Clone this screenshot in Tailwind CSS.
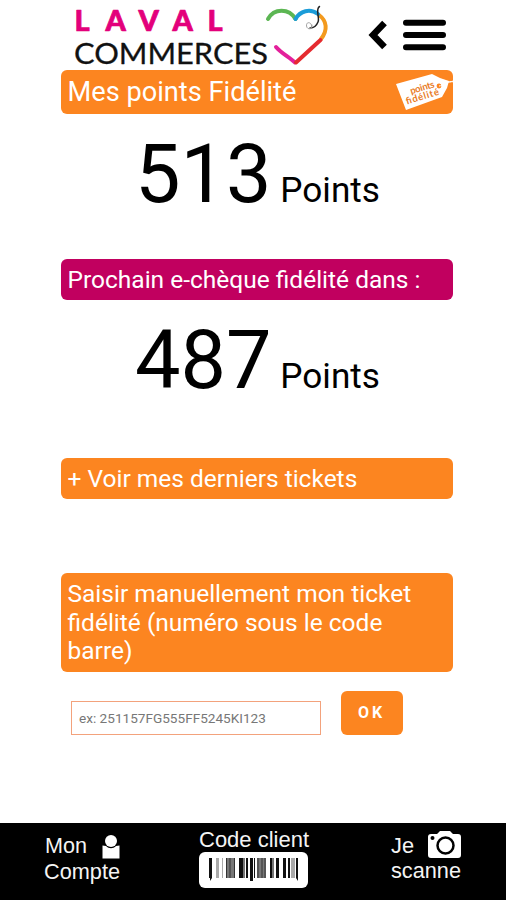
<!DOCTYPE html>
<html lang="fr">
<head>
<meta charset="utf-8">
<title>Laval Commerces</title>
<script src="https://cdn.jsdelivr.net/npm/@tailwindcss/browser@4"></script>
</head>
<body class="bg-white">
<div class="w-[506px] h-[900px] flex flex-col bg-white text-black font-[Roboto,sans-serif] overflow-hidden">
  <header class="h-[70px] shrink-0 flex">
    <svg class="ml-[61px] w-[280px] h-[70px]" viewBox="61 0 280 70" fill="none" stroke-linecap="round" stroke-linejoin="round">
      <text x="74.500 105.500 138.500 172.500 207.500" y="31" font-family="Lato, sans-serif" font-weight="900" font-size="29" fill="#e3007b" stroke="#e3007b" stroke-width=".7">LAVAL</text>
      <text x="74" y="63.5" font-family="Lato, sans-serif" font-weight="400" font-size="28.500" fill="#111" stroke="#111" stroke-width=".3" textLength="194" lengthAdjust="spacingAndGlyphs">COMMERCES</text>
      <g stroke-width="4">
        <path d="M268 19C274 8 289 8 295.500 19" stroke="#5cb653"/>
        <path d="M319 15C327 21 328 30 321 39" stroke="#f39a1e"/>
        <path d="M295.500 19C300 11 310 8 318 14" stroke="#1b9cd8"/>
        <path d="M295 62.500C289 57 281 53 276 47" stroke="#e3209b"/>
        <path d="M320.500 40L296 62.500" stroke="#e52b30"/>
      </g>
      <path d="M319.500 6.500C315 9 320 18 318 22C316 27 313 28 310 28" stroke="#222" stroke-width="1.500"/>
      <path d="M311 28C314 23 306 20 306.500 26C307 30 313 30 312 25" stroke="#999" stroke-width=".9"/>
    </svg>
    <svg class="ml-[23px] w-[90px] h-[70px]" viewBox="364 0 90 70" fill="none" stroke="#000" stroke-width="6">
      <path d="M384.500 23L373 35L384.500 47" stroke-width="6.500"/>
      <path d="M406 22.800H443M406 35H443M406 47.200H443" stroke-linecap="round"/>
    </svg>
  </header>
  <main class="ml-[61px] w-[392px] h-[753px] shrink-0 flex flex-col">
    <section class="h-[44px] shrink-0 rounded-[6px] bg-[#fc8520] text-white flex items-center justify-between pl-[6.5px]">
      <h1 class="text-[27.2px] leading-[43px] whitespace-nowrap">Mes points Fidélité</h1>
      <svg class="w-[60px] h-[44px] overflow-visible" viewBox="393 70 60 44">
        <path d="M396 84L432 74L440 78L449 81L447 88L442 97L406 110Z" fill="#fff"/>
        <circle cx="439" cy="86" r="2.400" fill="#fc8520"/>
        <path d="M439 86C443 86 447 80 454 82M440 84C445 79 448 84 453 81" fill="none" stroke="#fff" stroke-width="1"/>
        <g fill="#e87a25" font-family="Lato, sans-serif" font-weight="700" transform="rotate(-17 422 92)">
          <text x="411" y="91" font-size="9.500" textLength="25">points</text>
          <text x="404" y="99.500" font-size="9.500" textLength="34">fidélité</text>
        </g>
      </svg>
    </section>
    <div class="h-[145px] shrink-0 pl-[74px] pt-[13px] leading-[95px] whitespace-nowrap"><span class="text-[81px]">513</span><span class="text-[35.2px]"> Points</span></div>
    <section class="h-[41px] shrink-0 rounded-[6px] bg-[#c1005f] text-white pl-[6.5px]">
      <h2 class="text-[24.5px] leading-[41px] whitespace-nowrap">Prochain e-chèque fidélité dans :</h2>
    </section>
    <div class="h-[158px] shrink-0 pl-[74px] pt-[13px] leading-[95px] whitespace-nowrap"><span class="text-[81px]">487</span><span class="text-[35.2px]"> Points</span></div>
    <section class="h-[41px] shrink-0 rounded-[6px] bg-[#fc8520] text-white pl-[6.5px]">
      <h2 class="text-[24.5px] leading-[41px] whitespace-nowrap">+ Voir mes derniers tickets</h2>
    </section>
    <section class="mt-[74px] h-[99px] shrink-0 rounded-[6px] bg-[#fc8520] text-white pl-[6.5px] pt-[7px]">
      <h2 class="text-[24.5px] leading-[28.5px] whitespace-nowrap">Saisir manuellement mon ticket<br>fidélité (numéro sous le code<br>barre)</h2>
    </section>
    <div class="mt-[19px] pl-[10px] flex items-end gap-[19.5px]">
      <div class="w-[250px] h-[34px] border border-[#f3a27c] pl-[7px] text-[#777] text-[13.6px] leading-[32px] whitespace-nowrap">ex: 251157FG555FF5245KI123</div>
      <button class="w-[62px] h-[44px] rounded-[6px] bg-[#fc8520] text-white text-[16px] font-bold tracking-[3px]">OK</button>
    </div>
  </main>
  <footer class="h-[77px] shrink-0 bg-black text-[#f4f4f4]">
    <svg class="w-[506px] h-[77px]" viewBox="0 823 506 77" font-family="Liberation Sans, Arial, sans-serif" font-size="22" fill="#f4f4f4">
      <text x="45" y="852.500" textLength="42" lengthAdjust="spacingAndGlyphs">Mon</text>
      <text x="44" y="879" textLength="76" lengthAdjust="spacingAndGlyphs">Compte</text>
      <path d="M102.500 845.500L106 846C109 849 113 849 116 846L119.500 845.500V858.500H102.500Z" fill="#fff"/>
      <circle cx="111" cy="841" r="6" fill="#fff"/>
      <text x="199" y="847" textLength="110" lengthAdjust="spacingAndGlyphs">Code client</text>
      <rect x="199" y="852" width="109" height="36" rx="6" fill="#fff"/>
      <g fill="#111">
        <path d="M209 858h3v20l-2 3v-3h-1zM250 858h3v23h-3zM296 858h2v23l-2-3z"/>
        <path d="M239 858h4v20h-4zM246 858h2v20h-2zM254 858h1v20h-1zM276 858h3v20h-3zM283 858h3v20h-3zM288 858h2v20h-2zM270 858h2v20h-2z"/>
      </g>
      <path d="M216 858h3v20h-3zM222 858h1v20h-1zM291 858h4v20h-4z" fill="#aaa"/>
      <path d="M226 858h9v20h-9zM243 858h2v20h-2zM257 858h9v20h-9zM272 858h2v20h-2z" fill="#777"/>
      <path d="M226.500 858v20M230 858v20M234.500 858v20M258 858v20M262 858v20M265 858v20" stroke="#333"/>
      <text x="391" y="852.500" textLength="23" lengthAdjust="spacingAndGlyphs">Je</text>
      <text x="391" y="877.500" textLength="70" lengthAdjust="spacingAndGlyphs">scanne</text>
      <path d="M431 834H437L440 831H450L453 834H458Q461 834 461 837V855Q461 858 458 858H431Q428 858 428 855V837Q428 834 431 834Z" fill="#fff"/>
      <circle cx="445.500" cy="845.500" r="8" fill="none" stroke="#000" stroke-width="2.500"/>
      <circle cx="432.500" cy="838" r="2" fill="#000"/>
    </svg>
  </footer>
</div>
</body>
</html>
